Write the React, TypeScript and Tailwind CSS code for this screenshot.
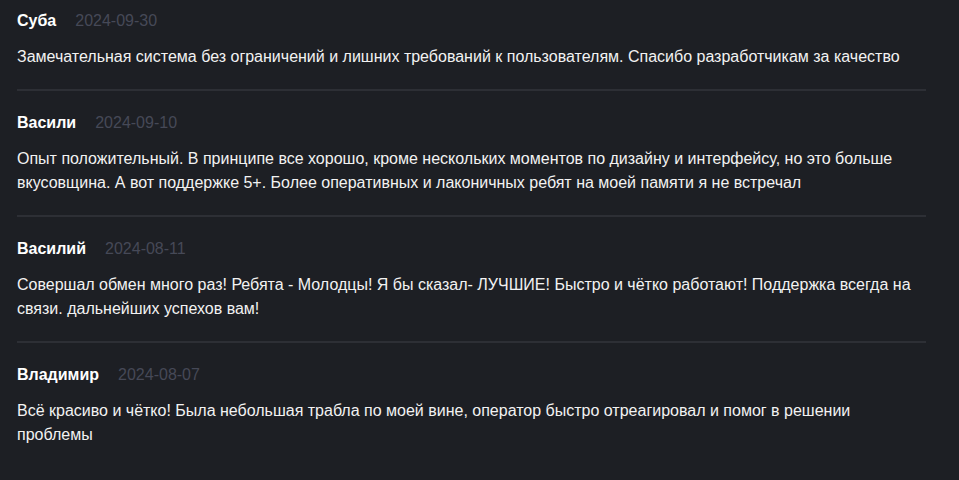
const reviews = [
  {
    name: "Суба",
    date: "2024-09-30",
    text: "Замечательная система без ограничений и лишних требований к пользователям. Спасибо разработчикам за качество",
  },
  {
    name: "Васили",
    date: "2024-09-10",
    text: "Опыт положительный. В принципе все хорошо, кроме нескольких моментов по дизайну и интерфейсу, но это больше вкусовщина. А вот поддержке 5+. Более оперативных и лаконичных ребят на моей памяти я не встречал",
  },
  {
    name: "Василий",
    date: "2024-08-11",
    text: "Совершал обмен много раз! Ребята - Молодцы! Я бы сказал- ЛУЧШИЕ! Быстро и чётко работают! Поддержка всегда на связи. дальнейших успехов вам!",
  },
  {
    name: "Владимир",
    date: "2024-08-07",
    text: "Всё красиво и чётко! Была небольшая трабла по моей вине, оператор быстро отреагировал и помог в решении проблемы",
  },
];

export default function App() {
  return (
    <div className="min-h-[480px] bg-[#1d1f24] font-['Liberation_Sans',Arial,sans-serif] text-[16px] leading-[24px]">
      <div className="ml-[17px] w-[909px] pt-[9px]">
        {reviews.map((r, i) => (
          <div
            key={r.name}
            className={
              i < reviews.length - 1
                ? "border-b-2 border-[#2d2f35] pb-[20px] mb-[20px]"
                : "pb-[20px]"
            }
          >
            {/* header */}
            <div className="flex items-center gap-[19px]">
              <span className="font-bold text-white">{r.name}</span>
              <span className="text-[#464957]">{r.date}</span>
            </div>
            <p className="mt-[12px] text-[#f2f2f2]">{r.text}</p>
          </div>
        ))}
      </div>
    </div>
  );
}
